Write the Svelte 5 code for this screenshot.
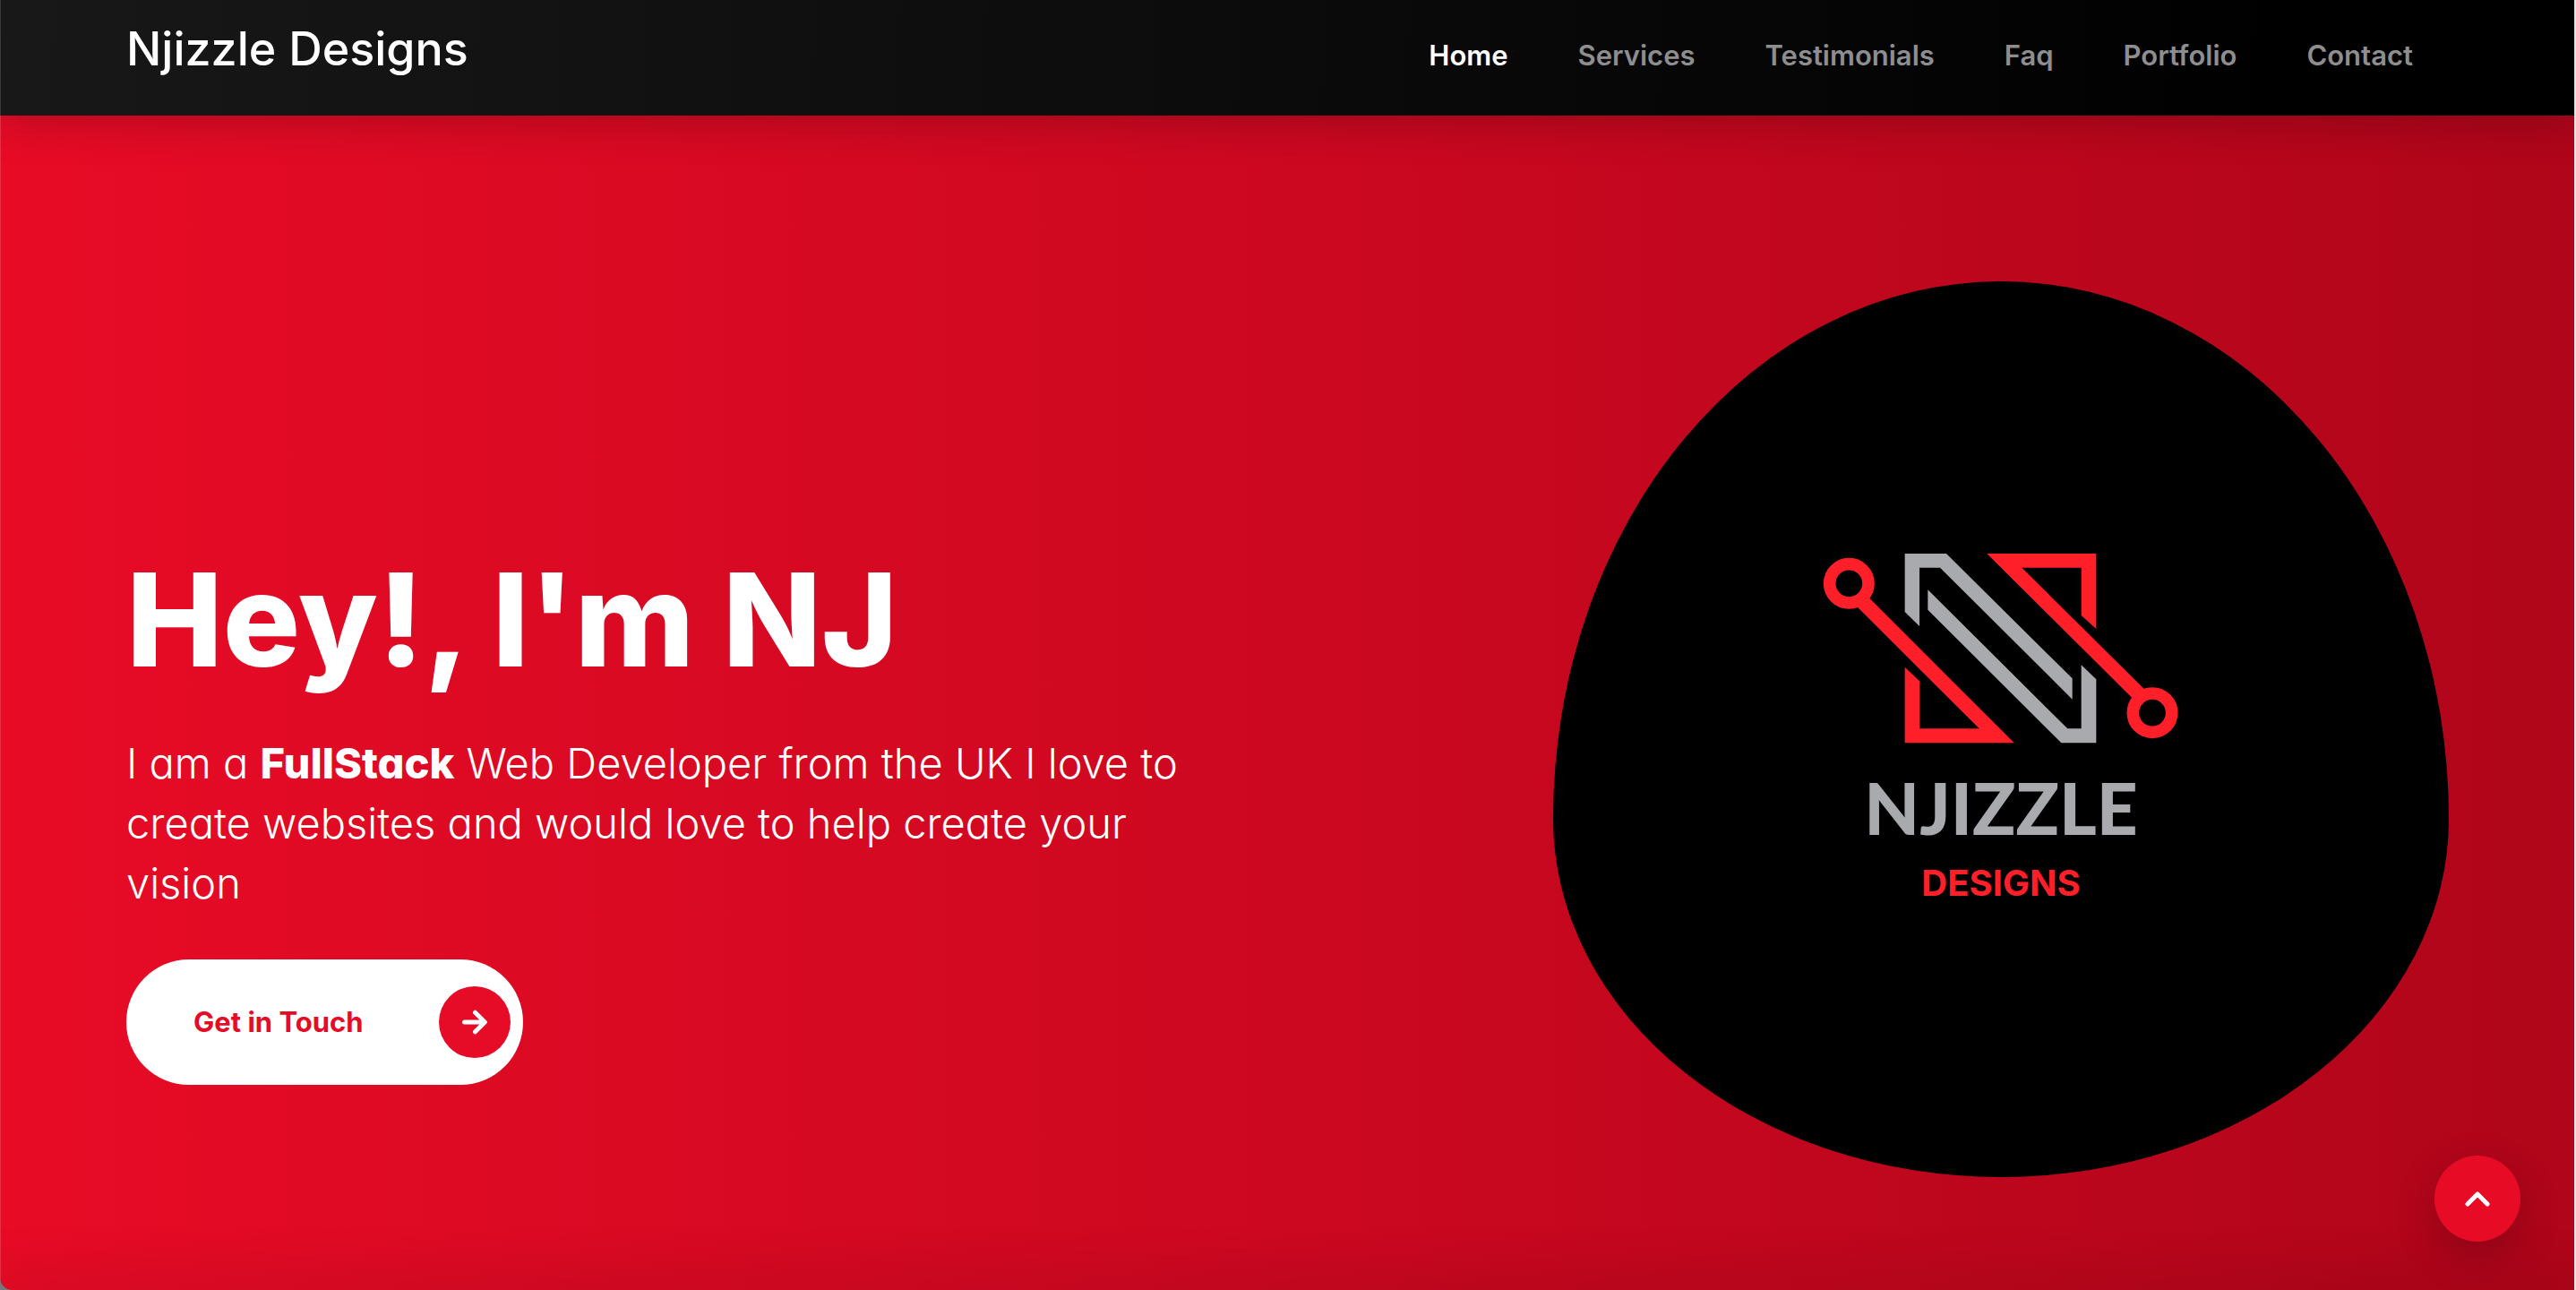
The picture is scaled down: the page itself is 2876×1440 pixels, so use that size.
<script>
  const links = ['Home', 'Services', 'Testimonials', 'Faq', 'Portfolio', 'Contact'];
  let active = $state('Home');
</script>

<div class="page">
  <header class="header">
    <a class="brand" href="#home">Njizzle Designs</a>
    <nav class="nav" aria-label="Main">
      {#each links as link}
        <a
          href={'#' + link.toLowerCase()}
          class:active={active === link}
          onclick={() => (active = link)}>{link}</a>
      {/each}
    </nav>
  </header>

  <main class="hero" id="home">
    <section class="intro">
      <h1>Hey!, I'm NJ</h1>
      <p>
        I am a <strong>FullStack</strong> Web Developer from the UK I love to create websites and
        would love to help create your vision
      </p>
      <a class="cta" href="#contact">
        <span>Get in Touch</span>
        <span class="cta-icon">
          <svg viewBox="0 0 28 28" aria-hidden="true">
            <path d="M2.5 14H25M14.5 3.2 25.3 14 14.5 24.8" />
          </svg>
        </span>
      </a>
    </section>

    <div class="blob">
      <svg class="mark" viewBox="102 78 1200 642" role="img" aria-label="Njizzle Designs logo">
        <g class="silver">
          <path d="M380 84H519L941 502V572L498 131H429V327L380 279Z" />
          <path d="M457 205 925 670H971V457L1021 505V718H904L457 272Z" />
        </g>
        <g class="red">
          <path d="M655 84H1021V336L971 291V131H772L1185 541L1144 570Z" />
          <path d="M746 718H380V464L429 511V670H629L220 262L260 232Z" />
        </g>
        <g class="rings">
          <circle cx="193" cy="184" r="65" />
          <circle cx="1209" cy="617" r="65" />
        </g>
      </svg>
      <div class="logo-name">NJIZZLE</div>
      <div class="logo-sub">DESIGNS</div>
    </div>
  </main>

  <div class="next"></div>

  <button class="to-top" type="button" aria-label="Back to top">
    <svg viewBox="0 0 28 18" aria-hidden="true"><path d="M3 15 14 4 25 15" /></svg>
  </button>
</div>

<style>
  :global(body) {
    margin: 0;
    background: #777;
  }

  .page {
    position: relative;
    overflow: hidden;
    box-sizing: border-box;
    min-height: 100vh;
    border-right: 2px solid #e4e0e2;
    border-bottom-left-radius: 14px;
    background: linear-gradient(90deg, #e80b26 0%, #b0051a 100%);
    font-family: Inter, 'Liberation Sans', sans-serif;
    color: #fff;
    display: flex;
    flex-direction: column;
  }

  .page::before {
    content: '';
    position: absolute;
    inset: 0 auto 0 0;
    z-index: 2;
    width: 1px;
    background: rgba(255, 255, 255, 0.15);
  }

  a {
    color: inherit;
    text-decoration: none;
  }

  .header {
    position: relative;
    z-index: 1;
    box-sizing: border-box;
    height: 129px;
    padding: 20px 180px 0 141px;
    display: flex;
    align-items: baseline;
    justify-content: space-between;
    background: linear-gradient(92deg, #181818 0%, #000 90%);
    box-shadow: 0 8px 48px rgba(0, 0, 0, 0.22);
  }

  .brand {
    font-size: 52px;
    line-height: 70px;
    font-weight: 500;
  }

  .nav {
    display: flex;
    gap: 78px;
    font-size: 31px;
    line-height: 40px;
    font-weight: 600;
    color: #8e8e8e;
  }

  .nav .active {
    color: #fff;
  }

  .hero {
    flex: 1;
    padding: 185px 140px 126px 141px;
    display: flex;
    align-items: flex-end;
    justify-content: space-between;
    gap: 80px;
  }

  .intro {
    flex: 0 1 1200px;
    padding-bottom: 103px;
    font-feature-settings: 'cv11';
  }

  h1 {
    margin: 0;
    font-size: 144px;
    line-height: 176px;
    font-weight: 800;
  }

  p {
    margin: 38px 0 52px;
    font-size: 47px;
    line-height: 67px;
    font-weight: 300;
  }

  strong {
    font-weight: 800;
  }

  .cta {
    box-sizing: border-box;
    width: 443px;
    height: 140px;
    padding: 0 14px 0 75px;
    border-radius: 70px;
    display: flex;
    align-items: center;
    justify-content: space-between;
    background: #fff;
    color: #e60b26;
    font-size: 31px;
    line-height: 40px;
    font-weight: 700;
    font-feature-settings: normal;
  }

  .cta-icon {
    width: 80px;
    height: 80px;
    border-radius: 50%;
    display: grid;
    place-items: center;
    background: #e60b26;
  }

  svg {
    display: block;
  }

  .cta-icon svg {
    width: 28px;
  }

  .cta-icon path,
  .to-top path {
    fill: none;
    stroke: #fff;
    stroke-width: 5;
    stroke-linecap: round;
    stroke-linejoin: round;
  }

  .blob {
    flex: 0 1 1000px;
    box-sizing: border-box;
    aspect-ratio: 1;
    padding-top: 302px;
    border-radius: 50% 50% 50% 50% / 60% 60% 40% 40%;
    display: flex;
    flex-direction: column;
    align-items: center;
    background: #000;
  }

  .mark {
    width: 400px;
    height: 214px;
  }

  .silver {
    fill: #a9aaae;
  }

  .red {
    fill: #ff1f29;
  }

  .rings {
    fill: #000;
    stroke: #ff1f29;
    stroke-width: 41;
  }

  .logo-name {
    margin-top: 27px;
    color: #a9aaae;
    font-family: Lato, sans-serif;
    font-size: 80px;
    line-height: 88px;
    font-weight: 900;
  }

  .logo-sub {
    margin-top: 17px;
    color: #ff1f29;
    font-size: 40px;
    line-height: 48px;
    font-weight: 700;
  }

  .next {
    box-shadow: 0 0 60px 8px rgba(0, 0, 0, 0.25);
  }

  .to-top {
    position: fixed;
    right: 62px;
    bottom: 54px;
    width: 96px;
    height: 96px;
    padding: 0;
    border: 0;
    border-radius: 50%;
    display: grid;
    place-items: center;
    background: #e80b26;
    box-shadow: 0 16px 48px rgba(0, 0, 0, 0.2);
  }

  .to-top svg {
    width: 28px;
  }
</style>
